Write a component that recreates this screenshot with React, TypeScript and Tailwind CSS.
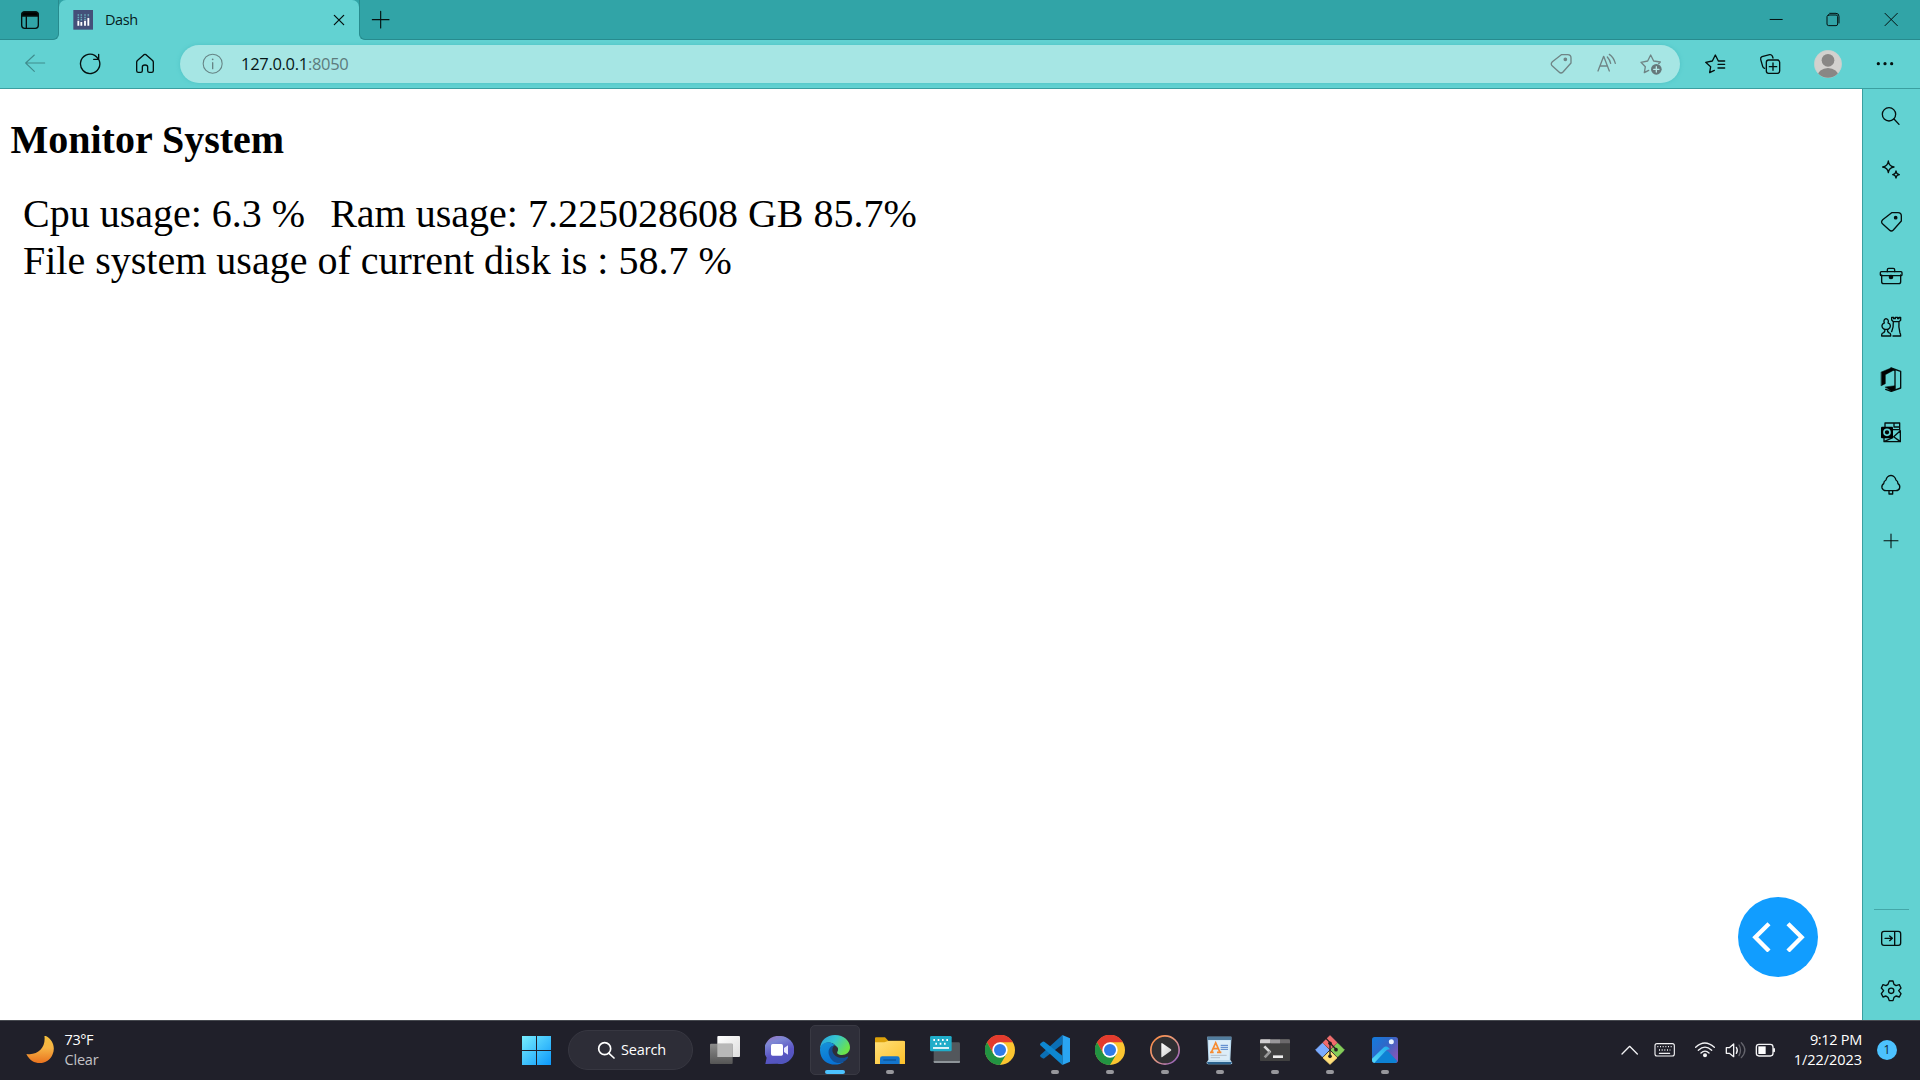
import type { ReactNode } from "react";

type IconProps = { box: string; w: number; h: number; sw?: number; color?: string; children: ReactNode };

/* Icons are drawn on a grid of three units per pixel. */
function Icon({ box, w, h, sw = 4, color = "#04100f", children }: IconProps) {
  return (
    <svg viewBox={box} width={w} height={h} fill="none" stroke={color} strokeWidth={sw} strokeLinecap="round" strokeLinejoin="round" className="block shrink-0">
      {children}
    </svg>
  );
}

const TAG = "M125 164 H144 Q154 164 154 174 V189 L130 216 Q124 222 118 216 L99 199 Q91 192 98 185 Z";

function TitleBar() {
  return (
    <div className="flex h-10 bg-[#62d2d2]">
      <div className="flex w-[59px] items-center border-b border-r border-[#278b8e] rounded-br-[6px] bg-[#31a4a7] pl-5">
        <Icon box="60 30 60 60" w={20} h={20}>
          <rect x="65" y="36" width="50" height="49" rx="9" />
          <path d="M66 48 V44 Q66 36 74 36 H106 Q114 36 114 44 V48 Z" fill="#000" />
          <path d="M79 50 V84" />
        </Icon>
      </div>
      <div className="w-[300px] bg-linear-to-b from-[#31a4a7] from-50% to-[#62d2d2] to-50%">
        <div className="flex h-full items-center rounded-t-[7px] bg-[#62d2d2] pl-[14px]">
          <Icon box="218 30 60 60" w={20} h={20} sw={5}>
            <rect x="219" y="30" width="59" height="59" fill="#445079" stroke="none" />
            <path d="M234 62V77M243 66V77M254 62V77M264 54V77" stroke="#fff" strokeWidth="5.5" strokeLinecap="butt" />
            <path d="M234 43V60M243 43V64M254 43V60M264 43V52" stroke="#69aebd" strokeWidth="4.5" strokeDasharray="4.5 2.5" strokeLinecap="butt" />
          </Icon>
          <span className="ml-[12px] w-[228px] font-['Open_Sans','Noto_Sans',sans-serif] text-[14.5px] leading-5 tracking-[-0.45px] text-[#071c1d]">Dash</span>
          <Icon box="1000 44 36 36" w={12} h={12} sw={3.8}>
            <path d="M1004 48L1032 76M1032 48L1004 76" />
          </Icon>
        </div>
      </div>
      <div className="flex flex-1 items-center rounded-bl-[6px] border-b border-l border-[#278b8e] bg-[#31a4a7] pl-[11px]">
        <Icon box="1113 30 60 60" w={20} h={20} sw={3.4}>
          <path d="M1117 59H1167M1142 34V84" />
        </Icon>
        <div className="ml-auto flex items-center">
          <Icon box="748 36 42 46" w={14} h={15.3} sw={3}>
            <path d="M750 58.5H789" strokeLinecap="butt" />
          </Icon>
          <div className="ml-[43px]">
            <Icon box="919 36 42 46" w={14} h={15.3} sw={3}>
              <rect x="922" y="45" width="32" height="32" rx="5" />
              <path d="M930 40H949Q958 40 958 49V69" />
            </Icon>
          </div>
          <div className="ml-[44px] mr-[22px]">
            <Icon box="1092 36 42 46" w={14} h={15.3} sw={3}>
              <path d="M1095 40L1132 77M1132 40L1095 77" />
            </Icon>
          </div>
        </div>
      </div>
    </div>
  );
}

function Toolbar() {
  return (
    <div className="flex h-[49px] items-center border-b border-[#3b9fa0] bg-[#62d2d2] pl-6 font-['Open_Sans','Noto_Sans',sans-serif]">
      <Icon box="72 159 66 66" w={22} h={22} sw={3.2} color="#3f8b8c">
        <path d="M134 189H77M103 165L77 189L103 214" />
      </Icon>
      <div className="ml-[33px]">
        <Icon box="237 159 66 66" w={22} h={22}>
          <path d="M297 180A29 29 0 1 1 284 166Q290 170 296 178M296 163V178H281" />
        </Icon>
      </div>
      <div className="ml-[33px]">
        <Icon box="402 159 66 66" w={22} h={22}>
          <path d="M410 186Q410 183 413 181L432 164Q435 162 438 164L457 181Q460 183 460 186V212Q460 217 455 217H448Q443 217 443 212V201Q443 195 435 195T427 201V212Q427 217 422 217H415Q410 217 410 212Z" />
        </Icon>
      </div>
      <div className="ml-6 flex h-[38px] w-[1500px] items-center rounded-full bg-[#a6e6e4] pl-[22px] shadow-[0_0_4px_#4fc2c4]">
        <Icon box="605 159 66 66" w={22} h={22} sw={3.2} color="#668485">
          <circle cx="637" cy="191" r="28.5" />
          <path d="M637 188V206" strokeWidth="4" />
          <circle cx="637" cy="178" r="2.6" fill="#668485" stroke="none" />
        </Icon>
        <span className="ml-[17px] text-[16.5px] leading-6 tracking-[-0.3px] text-[#061617]">
          127.0.0.1<span className="text-[#5d7b7c]">:8050</span>
        </span>
        <div className="ml-auto mr-[17px] flex items-center gap-[23px]">
          <Icon box="91 159 66 66" w={22} h={22} color="#6f8485">
            <path d={TAG} />
            <circle cx="137" cy="178" r="3.6" fill="#6f8485" />
          </Icon>
          <Icon box="226 159 66 66" w={22} h={22} color="#6f8485">
            <path d="M235 213L252 169L269 213M241 198H263M263 171Q271 180 273 190M269 163Q282 172 287 190" />
          </Icon>
          <Icon box="362 159 69 66" w={23} h={22} color="#6f8485">
            <path d="M388 211L375 218L378 200L365 187L385 183L394 165L403 183L423 186L418 191" />
            <circle cx="411" cy="208" r="16" fill="#66797b" stroke="none" />
            <path d="M403 208H419M411 200V216" stroke="#b6e9e7" />
          </Icon>
        </div>
      </div>
      <div className="ml-[24px]">
        <Icon box="552 159 66 66" w={22} h={22}>
          <path d="M583 211L569 218L572 200L557 187L577 183L586 165L595 183H614M594 193H614M594 204H614" />
        </Icon>
      </div>
      <div className="ml-[33px]">
        <Icon box="717 159 66 66" w={22} h={22}>
          <path d="M734 205Q729 203 728 199L722 178Q721 172 726 170L749 164Q754 163 757 168L759 174" />
          <rect x="739" y="180" width="40" height="40" rx="7" />
          <path d="M759 189V211M748 200H770" />
        </Icon>
      </div>
      <div className="ml-[33px]">
        <Icon box="882 150 84 84" w={28} h={28}>
          <clipPath id="face"><circle cx="924" cy="192" r="41" /></clipPath>
          <circle cx="924" cy="192" r="41" fill="#d3d1ce" stroke="#c2d2cf" strokeWidth="2" />
          <g clipPath="url(#face)" fill="#898785" stroke="none">
            <circle cx="924" cy="181" r="19" />
            <ellipse cx="924" cy="230" rx="32" ry="26" />
          </g>
        </Icon>
      </div>
      <div className="ml-[34px]">
        <Icon box="1068 159 54 66" w={18} h={22}>
          <g fill="#04100f" stroke="none"><circle cx="1075" cy="191" r="4.8" /><circle cx="1095" cy="191" r="4.8" /><circle cx="1115" cy="191" r="4.8" /></g>
        </Icon>
      </div>
    </div>
  );
}

function Slot({ cls, children }: { cls: string; children: ReactNode }) {
  return <div className={`${cls} flex w-full shrink-0 items-center justify-center pr-[2px]`}>{children}</div>;
}

function Sidebar() {
  return (
    <aside className="flex w-[58px] flex-col items-center border-l border-[#3b9fa0] bg-[#62d2d2] pb-1 pt-px">
      <Slot cls="h-[52px]">
        <Icon box="92 46 66 66" w={22} h={22}><circle cx="119" cy="74" r="20" /><path d="M134 88L149 104" /></Icon>
      </Slot>
      <Slot cls="h-[53px]">
        <Icon box="92 204 66 66" w={22} h={22}>
          <path d="M117 213Q119 229 134 231Q119 233 117 248Q115 233 100 231Q115 229 117 213ZM140 243Q141 253 150 254Q141 255 140 264Q139 255 130 254Q139 253 140 243Z" />
        </Icon>
      </Slot>
      <Slot cls="h-[53px]">
        <Icon box="95 361 66 66" w={22} h={22}>
          <g transform="translate(5 202)"><path d={TAG} /><circle cx="137" cy="179" r="3.6" fill="#04100f" /></g>
        </Icon>
      </Slot>
      <Slot cls="h-[55px]">
        <Icon box="88 524 72 66" w={24} h={22}>
          <path d="M113 544V538Q113 534 117 534H131Q135 534 135 538V544M96 554V574Q96 580 102 580H147Q153 580 153 574V554" />
          <rect x="92" y="544" width="65" height="12" rx="3" />
          <circle cx="124" cy="560" r="5" fill="#04100f" />
        </Icon>
      </Slot>
      <Slot cls="h-[48px]">
        <Icon box="92 -16 66 70" w={22} h={23.3}>
          <path d="M97 47V43Q97 39 103 37Q107 34 107 27M97 47H124V43Q124 39 118 37Q114 34 114 27M107 27Q97 24 98 15Q100 9 105 8Q101 -2 110 -5Q120 -2 116 8Q122 9 123 15Q124 24 114 27M104 27H117" />
          <path d="M127 -9V-1L132 4Q133 21 127 34M127 -9H133V-5H138V-9H145V-5H149V-9H154V0L149 4Q147 22 152 38Q154 40 154 47H131M132 4H149" />
        </Icon>
      </Slot>
      <Slot cls="h-[57px]">
        <Icon box="92 140 66 78" w={22} h={26}>
          <path d="M125 143L154 153V203L126 213M137 150V206M125 144L136 150M109 207L126 213L137 206" />
          <path d="M96 155L125 143L136 148L108 163V190L96 196ZM108 200L137 196V207L126 213Z" fill="#000" strokeWidth="1.5" />
        </Icon>
      </Slot>
      <Slot cls="h-[48px]">
        <Icon box="92 300 66 68" w={22} h={22.7}>
          <path d="M107 317V306H151V327M134 306V318H151M104 351V362H153V329L133 347L152 361M131 326H151M130 350L104 362" />
          <rect x="95" y="317" width="36" height="35" rx="3" fill="#000" stroke="none" />
          <circle cx="113" cy="334" r="9" stroke="#62d2d2" strokeWidth="5" />
        </Icon>
      </Slot>
      <Slot cls="h-[58px]">
        <Icon box="90 458 66 70" w={22} h={23.3}>
          <path d="M123 465Q110 467 108 479Q101 482 101 490Q94 495 96 503Q99 511 108 511H138Q147 511 149 503Q151 495 144 490Q144 482 138 479Q135 467 123 465ZM117 512V521H128V512" />
        </Icon>
      </Slot>
      <Slot cls="h-[54px]">
        <Icon box="92 632 60 60" w={20} h={20} sw={3.2}><path d="M101 661H143M122 641V682" /></Icon>
      </Slot>
      <div className="mt-auto h-px w-[35px] bg-[#44a7a8]" />
      <Slot cls="h-[56px]">
        <Icon box="540 145 66 60" w={22} h={20}>
          <rect x="545" y="155" width="57" height="42" rx="7" />
          <path d="M584 156V196M555 176H576M569 169L577 176L569 183" />
        </Icon>
      </Slot>
      <Slot cls="h-[50px]">
        <Icon box="540 301 66 66" w={22} h={22}>
          <path d="M568 304H579L582 314L588 318L598 315L603 325L596 333L603 342L598 352L588 349L582 353L579 363H568L564 353L558 349L549 352L544 342L551 333L544 325L549 315L558 318L564 314Z" />
          <circle cx="573.5" cy="333.5" r="8" />
        </Icon>
      </Slot>
    </aside>
  );
}

function Page() {
  return (
    <main className="flex-1 bg-white font-['Liberation_Serif',serif] text-[40px] leading-[47px] text-black">
      <h1 className="pl-[10.5px] pt-[27px] font-bold">Monitor System</h1>
      <div className="flex gap-[25px] pl-[23px] pt-[27px]">
        <span>Cpu usage: 6.3 %</span>
        <span>Ram usage: 7.225028608 GB 85.7%</span>
      </div>
      <div className="pl-[23px]">File system usage of current disk is : 58.7 %</div>
    </main>
  );
}

function Task({ mark = "dot", children }: { mark?: "dot" | "none" | "active"; children: ReactNode }) {
  return (
    <div className={mark === "active" ? "relative mx-[2.5px] flex h-[50px] w-[50px] items-center justify-center rounded-[5px] border border-[#393943] bg-[#2e2e39]" : "relative flex h-[50px] w-[55px] items-center justify-center"}>
      {children}
      {mark === "dot" && <span className="absolute bottom-[1px] h-1 w-2 rounded-full bg-[#97979c]" />}
      {mark === "active" && <span className="absolute bottom-0 h-1 w-5 rounded-full bg-[#4cc2ff]" />}
    </div>
  );
}

function Chrome() {
  return (
    <svg viewBox="0 0 90 90" width="30" height="30">
      <circle cx="45" cy="45" r="45" fill="#fbc530" />
      <path d="M6 22A45 45 0 0 1 84 22H45L25 56Z" fill="#e33b2e" />
      <path d="M6 22A45 45 0 0 0 45 90L65 56L25 56Z" fill="#229342" />
      <circle cx="45" cy="45" r="23" fill="#fff" />
      <circle cx="45" cy="45" r="18" fill="#2f7be9" />
    </svg>
  );
}

function Taskbar() {
  return (
    <footer className="flex h-[60px] items-center border-t border-[#46494f] bg-[#20202a] pb-px font-['Open_Sans','Noto_Sans',sans-serif] text-[14.5px] text-white">
      <div className="flex w-[509px] items-center pl-[26px]">
        <svg viewBox="78 77 84 86" width="28" height="28.6">
          <defs><linearGradient id="moon" x1="0" y1="0" x2="0" y2="1"><stop stopColor="#f3bf3c" /><stop offset=".45" stopColor="#f6b444" /><stop offset="1" stopColor="#ea731f" /></linearGradient></defs>
          <path d="M133 75C156 83 168 109 158 132C146 165 97 170 79 131C115 137 139 110 133 75Z" fill="url(#moon)" />
        </svg>
        <div className="ml-[10.5px] leading-5 tracking-[-0.4px]">
          <div>73°F</div>
          <div className="tracking-[-0.2px] text-[#c3c3c7]">Clear</div>
        </div>
      </div>
      <Task mark="none">
        <svg viewBox="66 78 87 87" width="29" height="29">
          <defs><linearGradient id="win" x1="0" y1="0" x2="1" y2="1" ><stop stopColor="#77eefe" /><stop offset="1" stopColor="#0c98fb" /></linearGradient></defs>
          <path d="M66 78H108V120H66ZM111 78H153V120H111ZM66 123H108V165H66ZM111 123H153V165H111Z" fill="url(#win)" />
        </svg>
      </Task>
      <div className="ml-1 mr-1 flex h-10 w-[125px] items-center rounded-full border border-[#373741] bg-[#2d2d37] pl-7">
        <Icon box="290 92 54 54" w={18} h={18} sw={5} color="#fff"><circle cx="313" cy="115" r="18" /><path d="M326 129L341 143" /></Icon>
        <span className="ml-[6px] tracking-[-0.15px]">Search</span>
      </div>
      <Task mark="none">
        <svg viewBox="630 78 90 84" width="30" height="28">
          <defs>
            <linearGradient id="paper" x1="0" y1="0" x2="1" y2="1"><stop stopColor="#fff" /><stop offset="1" stopColor="#ddd" /></linearGradient>
            <linearGradient id="shade" x1="0" y1="0" x2="0" y2="1"><stop stopColor="#8c8c8c" /><stop offset="1" stopColor="#555" /></linearGradient>
          </defs>
          <rect x="652" y="78" width="68" height="63" rx="3" fill="url(#paper)" />
          <rect x="630" y="101" width="68" height="61" rx="3" fill="url(#shade)" />
          <path d="M652 101H698V141H652Z" fill="#b8b8b8" />
        </svg>
      </Task>
      <Task mark="none">
        <svg viewBox="795 78 87 84" width="29" height="28">
          <defs><linearGradient id="chat" x1="0" y1="0" x2=".4" y2="1"><stop stopColor="#a073c0" /><stop offset=".3" stopColor="#7d87d4" /><stop offset=".7" stopColor="#5b55c5" /><stop offset="1" stopColor="#5155bd" /></linearGradient></defs>
          <path d="M839 78A42 42 0 1 1 832 161L796 162L800 143A42 42 0 0 1 839 78Z" fill="url(#chat)" />
          <rect x="813" y="102" width="36" height="35" rx="5" fill="#fff" /><path d="M852 114L864 106V134L852 126Z" fill="#e8e9ff" />
        </svg>
      </Task>
      <Task mark="active">
        <svg viewBox="60 75 90 90" width="30" height="30">
          <defs>
            <linearGradient id="e1" x1="0" y1="0" x2="1" y2=".5"><stop stopColor="#279ee0" /><stop offset=".5" stopColor="#36c6cf" /><stop offset="1" stopColor="#6be34a" /></linearGradient>
            <linearGradient id="e2" x1="0" y1="0" x2=".4" y2="1"><stop stopColor="#1693d8" /><stop offset="1" stopColor="#0872d4" /></linearGradient>
          </defs>
          <path d="M60 117C61 91 80 75 105 75C132 75 150 93 150 112C150 127 139 135 126 135C116 135 110 131 112 126C116 119 115 112 108 108C94 91 67 96 60 117Z" fill="url(#e1)" />
          <path d="M60 118C63 95 91 91 105 106C91 108 84 123 92 138C99 154 118 158 131 156C109 172 59 165 60 118Z" fill="url(#e2)" />
          <path d="M105 106C91 107 81 121 88 137C97 162 126 168 144 143C145 141 143 139 141 140C119 150 97 137 97 120C97 113 101 109 105 106Z" fill="#124f96" />
        </svg>
      </Task>
      <Task>
        <svg viewBox="225 80 90 81" width="30" height="27">
          <defs><linearGradient id="fold" x1="0" y1="0" x2="1" y2="1"><stop stopColor="#ffe07a" /><stop offset="1" stopColor="#fdc029" /></linearGradient></defs>
          <path d="M225 84Q225 81 228 81H255L265 91H310Q315 91 315 96V110H225Z" fill="#dca10a" />
          <path d="M225 96H253L264 92H312Q315 92 315 95V161H225Z" fill="url(#fold)" />
          <path d="M240 161V145Q240 138 247 138H292Q299 138 299 145V161Z" fill="#1475cd" />
          <path d="M250 149H288" stroke="#0b4a86" strokeWidth="3" />
        </svg>
      </Task>
      <Task mark="none">
        <svg viewBox="390 78 90 82" width="30" height="27.3">
          <rect x="401" y="97" width="79" height="62" rx="4" fill="#53575c" /><path d="M401 153H480V156Q480 159 477 159H404Q401 159 401 156Z" fill="#8e9499" />
          <rect x="390" y="78" width="65" height="46" rx="4" fill="#20adc9" />
          <path d="M400 90H448M406 101H440" stroke="#fff" strokeWidth="6" strokeDasharray="5 8" /><path d="M399 114H447" stroke="#fff" strokeWidth="5" />
        </svg>
      </Task>
      <Task mark="none"><Chrome /></Task>
      <Task>
        <svg viewBox="720 75 90 90" width="30" height="30">
          <path d="M787 75L810 85V155L787 165Z" fill="#2aa5f2" />
          <path d="M787 75L721 135Q719 138 722 141L728 145Q731 147 734 144L787 103Z" fill="#0b6fb5" />
          <path d="M787 165L721 106Q719 103 722 100L728 95Q731 93 734 96L787 137Z" fill="#0e87d0" />
        </svg>
      </Task>
      <Task><Chrome /></Task>
      <Task>
        <svg viewBox="150 75 90 90" width="30" height="30">
          <defs>
            <linearGradient id="ring" x1="0" y1="0" x2="1" y2="1"><stop stopColor="#ff8a3d" /><stop offset=".5" stopColor="#e79a80" /><stop offset="1" stopColor="#8457cc" /></linearGradient>
            <linearGradient id="play" x1="0" y1="0" x2="1" y2="1"><stop stopColor="#fff" /><stop offset="1" stopColor="#c9c9c9" /></linearGradient>
          </defs>
          <circle cx="195" cy="120" r="42.5" fill="#303033" stroke="url(#ring)" strokeWidth="5" />
          <path d="M184 101Q184 98 187 100L213 118Q215 120 213 122L187 141Q184 143 184 140Z" fill="url(#play)" />
        </svg>
      </Task>
      <Task>
        <svg viewBox="320 75 80 87" width="26.7" height="29">
          <path d="M324 77H396V87L393 146L399 156Q398 160 394 160H326L321 156L327 146Z" fill="#b9d9ee" />
          <path d="M324 77H396V87H324Z" fill="#527d9e" /><path d="M328 88H392L390 147H330Z" fill="#dcedf8" /><path d="M323 153H398L394 160H326Z" fill="#2b638f" />
          <path d="M336 124L349 95L362 124M340 113H356M332 124H343M353 124H366" fill="none" stroke="#f78b30" strokeWidth="5" />
          <path d="M364 103H386M364 109H386M364 115H386" stroke="#4f7fc8" strokeWidth="3" /><path d="M334 133H382M334 140H362" stroke="#b2bfcb" strokeWidth="3" />
        </svg>
      </Task>
      <Task>
        <svg viewBox="480 86 90 67" width="30" height="22.4">
          <rect x="480" y="87" width="90" height="66" rx="4" fill="#404040" /><path d="M480 99V91Q480 87 484 87H510V99Z" fill="#cfcdcf" /><path d="M510 87H540V99H510Z" fill="#99979a" /><path d="M540 87H566Q570 87 570 91V99H540Z" fill="#6b696b" />
          <path d="M493 108L511 126" stroke="#d8d8d8" strokeWidth="8" /><path d="M511 123L494 141" stroke="#989898" strokeWidth="8" /><path d="M519 139H549" stroke="#eee" strokeWidth="8" />
        </svg>
      </Task>
      <Task>
        <svg viewBox="645 75 90 90" width="30" height="30" strokeLinejoin="round" strokeWidth="3">
          <path d="M690 77L711 98L690 118L669 98Z" fill="#f26b6b" stroke="#f77979" /><path d="M713 100L733 120L713 140L693 120Z" fill="#84cc59" stroke="#84cc59" />
          <path d="M667 100L687 120L667 140L647 120Z" fill="#7aabff" stroke="#7aabff" /><path d="M690 123L711 143L690 163L669 143Z" fill="#ffdf7a" stroke="#ffdf7a" />
          <path d="M675 82L690 98V137M690 99L708 118" stroke="#231e20" strokeWidth="4" fill="none" /><g fill="#231e20"><circle cx="690" cy="100" r="5.5" /><circle cx="708" cy="119" r="5.5" /><circle cx="690" cy="139" r="5.5" /></g>
        </svg>
      </Task>
      <Task>
        <svg viewBox="816 81 78 78" width="26" height="26">
          <defs>
            <linearGradient id="sky" x1="0" y1="0" x2="1" y2=".7"><stop stopColor="#127bdc" /><stop offset=".5" stopColor="#2f68c8" /><stop offset="1" stopColor="#8556b8" /></linearGradient>
            <linearGradient id="hill" x1="0" y1="1" x2="1" y2="0"><stop stopColor="#54daf8" /><stop offset="1" stopColor="#20acec" /></linearGradient>
          </defs>
          <rect x="816" y="81" width="78" height="78" rx="8" fill="url(#sky)" />
          <path d="M824 158L854 126Q860 120 866 126L892 153Q890 159 885 159H824Z" fill="#0d82d4" />
          <path d="M816 146L850 113Q858 106 866 113L870 118Q862 117 856 124L823 159Q816 158 816 151Z" fill="url(#hill)" />
          <circle cx="874" cy="95" r="7.5" fill="#e8f2ff" />
        </svg>
      </Task>
      <div className="ml-auto flex items-center">
        <Icon box="64 92 54 54" w={18} h={18} sw={4} color="#f2f2f4"><path d="M67 131L90 108L113 131" /></Icon>
        <div className="ml-[15px]">
          <Icon box="163 92 66 54" w={22} h={18} sw={3.4} color="#f2f2f4">
            <rect x="166" y="100" width="58" height="37" rx="6" />
            <path d="M173 109H217M178 119H212" strokeWidth="4" strokeDasharray="3 5" strokeLinecap="butt" /><path d="M179 129H210" />
          </Icon>
        </div>
        <div className="ml-[18px]">
          <Icon box="282 92 66 54" w={22} h={18} sw={4} color="#f2f2f4">
            <path d="M287 111Q314 85 343 111M295 120Q315 101 335 120M303 128Q315 117 327 128" /><circle cx="315" cy="135" r="4" fill="#fff" />
          </Icon>
        </div>
        <div className="ml-[9px]">
          <Icon box="373 92 66 54" w={22} h={18} sw={4} color="#f2f2f4">
            <path d="M377 112H386L399 101V139L386 129H377ZM407 111Q413 120 407 129" /><path d="M415 104Q424 119 415 136" stroke="#64646c" /><path d="M422 97Q443 119 422 142" stroke="#64646c" />
          </Icon>
        </div>
        <div className="ml-[8px]">
          <Icon box="463 92 66 54" w={22} h={18} sw={4} color="#f2f2f4">
            <rect x="467" y="102" width="50" height="35" rx="8" /><path d="M473 108H495V131H473Z" fill="#fff" stroke="none" /><path d="M520 116V123" strokeWidth="6" />
          </Icon>
        </div>
        <div className="w-[85px] text-right leading-5">
          <div className="tracking-[-0.3px]">9:12 PM</div>
          <div className="tracking-[-0.05px]">1/22/2023</div>
        </div>
        <div className="ml-[15px] mr-[23px] flex h-5 w-5 items-center justify-center rounded-full bg-[#4cc2ff] text-[12px] leading-none text-[#102a38]">1</div>
      </div>
    </footer>
  );
}

export default function App() {
  return (
    <div className="flex h-[1080px] w-[1920px] flex-col overflow-hidden whitespace-nowrap">
      <TitleBar />
      <Toolbar />
      <div className="flex h-[931px]">
        <div className="relative flex flex-1">
          <Page />
          <button className="absolute bottom-[43px] right-[44px] flex h-20 w-20 items-center justify-center rounded-full bg-[#119dff] pl-px">
            <svg viewBox="156 125 160 92" width="53.3" height="30.7" fill="none" stroke="#fff" strokeWidth="13" className="block">
              <path d="M207 130L166 171L207 212M264 130L305 171L264 212" />
            </svg>
          </button>
        </div>
        <Sidebar />
      </div>
      <Taskbar />
    </div>
  );
}
